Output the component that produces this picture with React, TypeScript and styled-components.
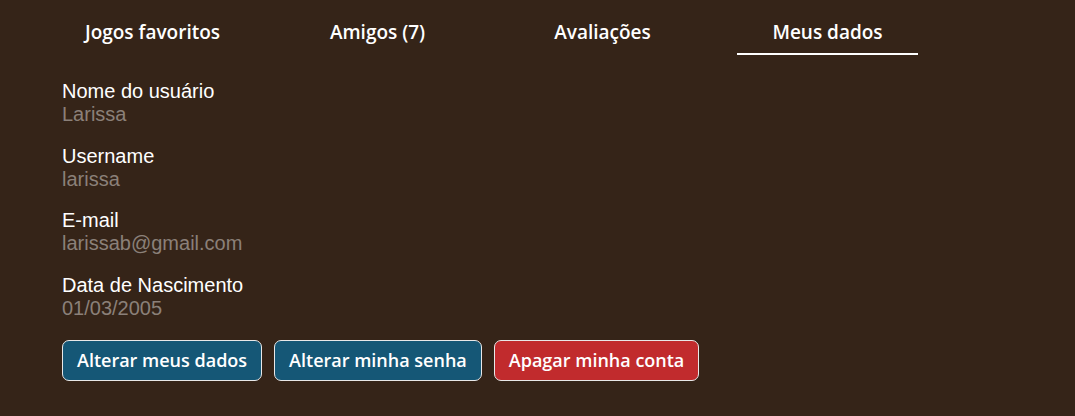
import React from "react";
import styled, { createGlobalStyle } from "styled-components";

const Global = createGlobalStyle`
  html, body { margin: 0; padding: 0; background: #352418; }
  body { font-family: "Liberation Sans", Arial, sans-serif; }
`;

const Page = styled.div`
  width: 1075px;
  height: 416px;
  background: #352418;
  padding: 0 62px;
  box-sizing: border-box;
`;

const Tabs = styled.nav`
  display: flex;
  gap: 44px;
  height: 55px;
`;

const Tab = styled.div<{ $active?: boolean }>`
  width: 181px;
  box-sizing: border-box;
  display: flex;
  align-items: flex-start;
  justify-content: center;
  padding-top: 19px;
  font-family: "Open Sans", sans-serif;
  font-weight: 600;
  font-size: 19px;
  line-height: 26px;
  color: #ffffff;
  border-bottom: 2px solid ${(p) => (p.$active ? "#ffffff" : "transparent")};
`;

const Fields = styled.div`
  display: flex;
  flex-direction: column;
  gap: 18.5px;
  padding-top: 25px;
`;

const Field = styled.div`
  display: flex;
  flex-direction: column;
`;

const Label = styled.div`
  font-size: 20px;
  line-height: 23px;
  color: #ffffff;
`;

const Value = styled.div`
  font-size: 20px;
  line-height: 23px;
  color: #8b8079;
`;

const Actions = styled.div`
  display: flex;
  gap: 12px;
  margin-top: 20px;
`;

const Button = styled.button<{ $danger?: boolean }>`
  height: 41px;
  padding: 0 14px;
  border: 1px solid #e8e8e8;
  border-radius: 7px;
  background: ${(p) => (p.$danger ? "#c12b2d" : "#155776")};
  color: #ffffff;
  font-family: "Open Sans", sans-serif;
  font-weight: 600;
  font-size: 18px;
  cursor: pointer;
`;

const fields = [
  ["Nome do usuário", "Larissa"],
  ["Username", "larissa"],
  ["E-mail", "larissab@gmail.com"],
  ["Data de Nascimento", "01/03/2005"],
];

export default function App() {
  return (
    <Page>
      <Global />
      <Tabs>
        <Tab>Jogos favoritos</Tab>
        <Tab>Amigos (7)</Tab>
        <Tab>Avaliações</Tab>
        <Tab $active>Meus dados</Tab>
      </Tabs>
      <Fields>
        {fields.map(([l, v]) => (
          <Field key={l}>
            <Label>{l}</Label>
            <Value>{v}</Value>
          </Field>
        ))}
      </Fields>
      <Actions>
        <Button>Alterar meus dados</Button>
        <Button>Alterar minha senha</Button>
        <Button $danger>Apagar minha conta</Button>
      </Actions>
    </Page>
  );
}
